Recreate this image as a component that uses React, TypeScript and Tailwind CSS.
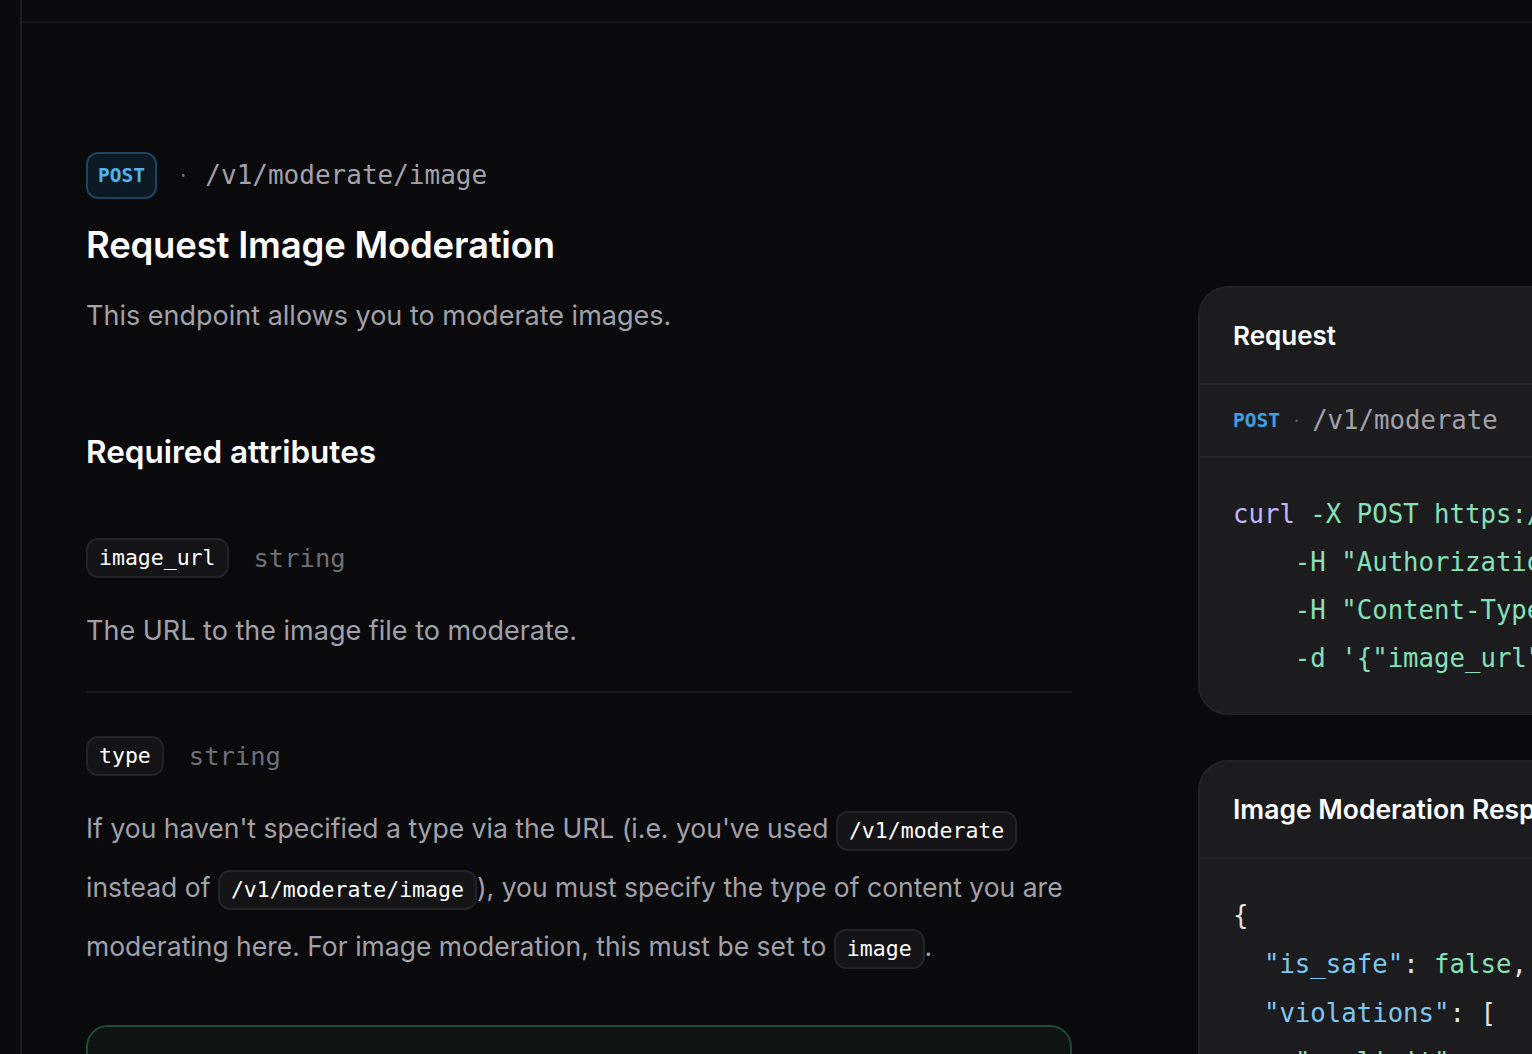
import React from "react";

const sans = { fontFamily: "Inter, 'Noto Sans', sans-serif" };
const mono = { fontFamily: "'DejaVu Sans Mono', 'Liberation Mono', monospace" };

function Chip({ children }: { children: React.ReactNode }) {
  return (
    <code
      style={mono}
      className="inline-flex h-[40px] items-center rounded-[12px] border-2 border-[#232327] bg-[#141417] px-[11px] align-middle text-[21.5px] leading-none text-white"
    >
      {children}
    </code>
  );
}

function Attr({ name }: { name: string }) {
  return (
    <div className="flex items-center gap-[25px]">
      <Chip>{name}</Chip>
      <span style={mono} className="text-[25.5px] text-[#6f6f76]">
        string
      </span>
    </div>
  );
}

export default function App() {
  return (
    <div
      style={sans}
      className="flex h-[1054px] w-[1532px] overflow-hidden bg-[#0a0a0c] antialiased"
    >
      <div className="w-[22px] shrink-0 border-r-2 border-[#1e1e21]" />
      <div className="flex min-w-0 flex-1 flex-col">
        <div className="h-[23px] shrink-0 border-b-2 border-[#18181b]" />
        <div className="flex gap-[126px] pl-[64px] pt-[129px]">
          {/* Left column */}
          <div className="flex w-[986px] shrink-0 flex-col">
            <div className="flex h-[47px] items-center">
              <span
                style={mono}
                className="flex h-[47px] w-[71px] items-center justify-center rounded-[12px] border-2 border-[#1c4560] bg-[#0c1a25] text-[19.5px] font-bold text-[#4fb3ec]"
              >
                POST
              </span>
              <span className="ml-[23px] text-[22px] text-[#6f6f76]">·</span>
              <span style={mono} className="ml-[19px] text-[26px] text-[#a1a1aa]">
                /v1/moderate/image
              </span>
            </div>
            <h1 className="mt-[24px] text-[36.5px] font-semibold leading-[44px] tracking-[-0.2px] text-white">
              Request Image Moderation
            </h1>
            <p className="mt-[29px] text-[27px] leading-[40px] text-[#a1a1aa]">
              This endpoint allows you to moderate images.
            </p>
            <h2 className="mt-[96px] text-[31.5px] font-semibold leading-[40px] text-white">
              Required attributes
            </h2>
            <div className="mt-[66px]">
              <Attr name="image_url" />
            </div>
            <p className="mt-[33px] text-[27px] leading-[40px] text-[#a1a1aa]">
              The URL to the image file to moderate.
            </p>
            <div className="mt-[40px] h-[2px] bg-[#18181b]" />
            <div className="mt-[43px]">
              <Attr name="type" />
            </div>
            <p className="mt-[23px] text-[26.5px] leading-[59px] text-[#a1a1aa]">
              <span className="whitespace-nowrap">
                If you haven't specified a type via the URL (i.e. you've used{" "}
                <Chip>/v1/moderate</Chip>
              </span>
              <br />
              <span className="whitespace-nowrap">
                instead of <Chip>/v1/moderate/image</Chip>), you must specify the type of content you are
              </span>
              <br />
              <span className="whitespace-nowrap">
                moderating here. For image moderation, this must be set to <Chip>image</Chip>.
              </span>
            </p>
            <div className="mt-[49px] h-[120px] rounded-[22px] border-2 border-[#1f4a36] bg-[#0d1412]" />
          </div>

          {/* Right column */}
          <div className="mt-[134px] flex w-[700px] shrink-0 flex-col gap-[45px]">
            <div className="overflow-hidden rounded-[30px] border-2 border-[#222226] bg-[#1c1c1f]">
              <div className="flex h-[97px] items-center border-b-2 border-[#27272a] px-[33px]">
                <span className="text-[26px] font-semibold text-white">Request</span>
              </div>
              <div className="flex h-[73px] items-center border-b-2 border-[#27272a] px-[33px]">
                <span style={mono} className="text-[19.5px] font-bold text-[#3f9fe0]">
                  POST
                </span>
                <span className="ml-[14px] text-[18px] text-[#6f6f76]">·</span>
                <span style={mono} className="ml-[13px] text-[25.7px] text-[#a1a1aa]">
                  /v1/moderate
                </span>
              </div>
              <pre
                style={mono}
                className="px-[33px] pb-[31px] pt-[32px] text-[25.7px] leading-[48px] text-[#86e0b8]"
              >
                <span className="text-[#c4b5fd]">curl</span>
                {" -X POST https://api.example.com/v1/moderate \\\n"}
                {'    -H "Authorization: Bearer YOUR_API_KEY" \\\n'}
                {'    -H "Content-Type: application/json" \\\n'}
                {`    -d '{"image_url": "https://example.com/image.jpg"}'`}
              </pre>
            </div>

            <div className="overflow-hidden rounded-[30px] border-2 border-[#222226] bg-[#1c1c1f]">
              <div className="flex h-[97px] items-center border-b-2 border-[#27272a] px-[33px]">
                <span className="text-[26.5px] font-semibold text-white">
                  Image Moderation Response
                </span>
              </div>
              <pre
                style={mono}
                className="px-[33px] pt-[32px] text-[25.7px] leading-[49px] text-[#e4e4e7]"
              >
                {"{\n"}
                {"  "}
                <span className="text-[#7cc7ef]">"is_safe"</span>
                {": "}
                <span className="text-[#86e0b8]">false</span>
                {",\n"}
                {"  "}
                <span className="text-[#7cc7ef]">"violations"</span>
                {": [\n"}
                {"    "}
                <span className="text-[#86e0b8]">"explicit"</span>
                {",\n"}
              </pre>
            </div>
          </div>
        </div>
      </div>
    </div>
  );
}
